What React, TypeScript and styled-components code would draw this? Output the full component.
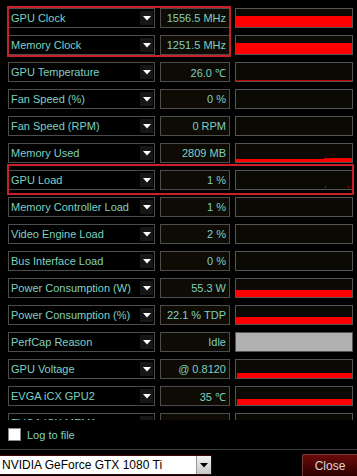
import React from "react";
import styled, { createGlobalStyle } from "styled-components";

const Global = createGlobalStyle`
  html, body { margin: 0; padding: 0; background: #000; }
  body { font-family: "Liberation Sans", Arial, sans-serif; }
  * { box-sizing: border-box; }
`;

const Window = styled.div`
  width: 357px;
  height: 476px;
  background: #000;
  display: flex;
  flex-direction: column;
  overflow: hidden;
`;

const ListArea = styled.div`
  position: relative;
  height: 420px;
  overflow: hidden;
  padding: 8px 0 0 8px;
  display: flex;
  flex-direction: column;
  gap: 7px;
  flex-shrink: 0;
`;

const Row = styled.div`
  display: grid;
  grid-template-columns: 147px 70px 118px;
  column-gap: 5px;
  height: 20px;
  flex-shrink: 0;
`;

const LabelBox = styled.div`
  border: 1px solid #4d4d4d;
  background: #000;
  display: flex;
  align-items: center;
  justify-content: space-between;
  padding: 0 1px 0 2px;
  color: #7fd0c1;
  font-size: 11px;
  white-space: nowrap;
`;

const DropBtn = styled.div`
  width: 13px;
  height: 14px;
  background: #161616;
  display: flex;
  align-items: center;
  justify-content: center;
`;

const ValueBox = styled.div`
  border: 1px solid #4d4d4d;
  background: #0d0b04;
  color: #7fd0c1;
  font-size: 11px;
  display: flex;
  align-items: center;
  justify-content: flex-end;
  padding-right: 3px;
  white-space: nowrap;
`;

const GraphBox = styled.div<{ $fill?: string }>`
  border: 1px solid #555;
  background: ${(p) => p.$fill || "#0b0904"};
  position: relative;
  display: flex;
  flex-direction: column;
  justify-content: flex-end;
  overflow: hidden;
`;

const Bar = styled.div<{ $inset?: number }>`
  background: #ff0000;
  margin-left: ${(p) => p.$inset || 0}px;
  flex-shrink: 0;
`;

const Dot = styled.div`
  position: absolute;
  bottom: 1px;
  width: 1px;
  height: 2px;
  background: #d00000;
`;

const Highlight = styled.div`
  position: absolute;
  border: 2px solid #c8202a;
  pointer-events: none;
`;

const LogRow = styled.div`
  height: 29px;
  display: flex;
  align-items: center;
  padding-left: 8px;
  gap: 6px;
  color: #7fd0c1;
  font-size: 11px;
  flex-shrink: 0;
`;

const Checkbox = styled.div`
  width: 13px;
  height: 13px;
  background: #fff;
  border: 1px solid #8a8a8a;
`;

const Separator = styled.div`
  height: 1px;
  background: #3c3c3c;
  flex-shrink: 0;
`;

const Footer = styled.div`
  flex: 1;
  display: flex;
  align-items: center;
  justify-content: space-between;
  padding-top: 2px;
`;

const Select = styled.div`
  width: 212px;
  height: 20px;
  display: flex;
  border: 1px solid #3a0608;
  border-left: none;
  background: #fff;
`;

const SelectText = styled.div`
  flex: 1;
  background: #fff;
  color: #000;
  font-size: 12px;
  display: flex;
  align-items: center;
  padding-left: 2px;
  white-space: nowrap;
`;

const SelectBtn = styled.div`
  width: 15px;
  background: linear-gradient(#f2f2f2, #c8c8c8);
  border-left: 1px solid #999;
  display: flex;
  align-items: center;
  justify-content: center;
`;

const CloseButton = styled.div`
  width: 55px;
  height: 24px;
  background: linear-gradient(#6a0a0a, #2a0000);
  border: 1px solid #7a3a3a;
  border-right: none;
  border-radius: 2px 0 0 2px;
  color: #d8d8d8;
  font-size: 12px;
  display: flex;
  align-items: center;
  justify-content: center;
  margin-top: 2px;
`;

type Graph =
  | { kind: "bar"; h: number; inset?: number }
  | { kind: "line"; h: number }
  | { kind: "mem" }
  | { kind: "dots" }
  | { kind: "gray" }
  | { kind: "none" };

const rows: { label: string; value: string; graph: Graph }[] = [
  { label: "GPU Clock", value: "1556.5 MHz", graph: { kind: "bar", h: 11 } },
  { label: "Memory Clock", value: "1251.5 MHz", graph: { kind: "bar", h: 11 } },
  { label: "GPU Temperature", value: "26.0 \u2103", graph: { kind: "line", h: 1 } },
  { label: "Fan Speed (%)", value: "0 %", graph: { kind: "none" } },
  { label: "Fan Speed (RPM)", value: "0 RPM", graph: { kind: "none" } },
  { label: "Memory Used", value: "2809 MB", graph: { kind: "mem" } },
  { label: "GPU Load", value: "1 %", graph: { kind: "dots" } },
  { label: "Memory Controller Load", value: "1 %", graph: { kind: "none" } },
  { label: "Video Engine Load", value: "2 %", graph: { kind: "none" } },
  { label: "Bus Interface Load", value: "0 %", graph: { kind: "none" } },
  { label: "Power Consumption (W)", value: "55.3 W", graph: { kind: "bar", h: 7 } },
  { label: "Power Consumption (%)", value: "22.1 % TDP", graph: { kind: "bar", h: 7 } },
  { label: "PerfCap Reason", value: "Idle", graph: { kind: "gray" } },
  { label: "GPU Voltage", value: "@ 0.8120", graph: { kind: "bar", h: 5, inset: 1 } },
  { label: "EVGA iCX GPU2", value: "35 \u2103", graph: { kind: "bar", h: 6, inset: 1 } },
  { label: "EVGA iCX MEM1", value: "30 \u2103", graph: { kind: "bar", h: 5, inset: 1 } },
];

const Arrow = ({ color = "#fff" }: { color?: string }) => (
  <svg width="8" height="5" viewBox="0 0 8 5">
    <polygon points="0,0 8,0 4,4.5" fill={color} />
  </svg>
);

const GraphView = ({ g }: { g: Graph }) => {
  switch (g.kind) {
    case "bar":
      return (
        <GraphBox>
          <Bar $inset={g.inset} style={{ height: g.h }} />
        </GraphBox>
      );
    case "line":
      return (
        <GraphBox>
          <Bar style={{ height: g.h, background: "#c00000" }} />
        </GraphBox>
      );
    case "mem":
      return (
        <GraphBox>
          <Bar style={{ height: 1, marginLeft: 88, background: "#e00000" }} />
          <Bar style={{ height: 3 }} />
        </GraphBox>
      );
    case "dots":
      return (
        <GraphBox>
          <Dot style={{ left: 89 }} />
          <Dot style={{ left: 112 }} />
        </GraphBox>
      );
    case "gray":
      return <GraphBox $fill="#b0b0b0" />;
    default:
      return <GraphBox />;
  }
};

export default function App() {
  return (
    <>
      <Global />
      <Window>
        <ListArea>
          {rows.map((r) => (
            <Row key={r.label}>
              <LabelBox>
                <span>{r.label}</span>
                <DropBtn>
                  <Arrow />
                </DropBtn>
              </LabelBox>
              <ValueBox>{r.value}</ValueBox>
              <GraphView g={r.graph} />
            </Row>
          ))}
          <Highlight style={{ left: 7, top: 6, width: 224, height: 51 }} />
          <Highlight style={{ left: 7, top: 164, width: 347, height: 31 }} />
        </ListArea>
        <LogRow>
          <Checkbox />
          <span>Log to file</span>
        </LogRow>
        <Separator />
        <Footer>
          <Select>
            <SelectText>NVIDIA GeForce GTX 1080 Ti</SelectText>
            <SelectBtn>
              <Arrow color="#000" />
            </SelectBtn>
          </Select>
          <CloseButton>Close</CloseButton>
        </Footer>
      </Window>
    </>
  );
}
